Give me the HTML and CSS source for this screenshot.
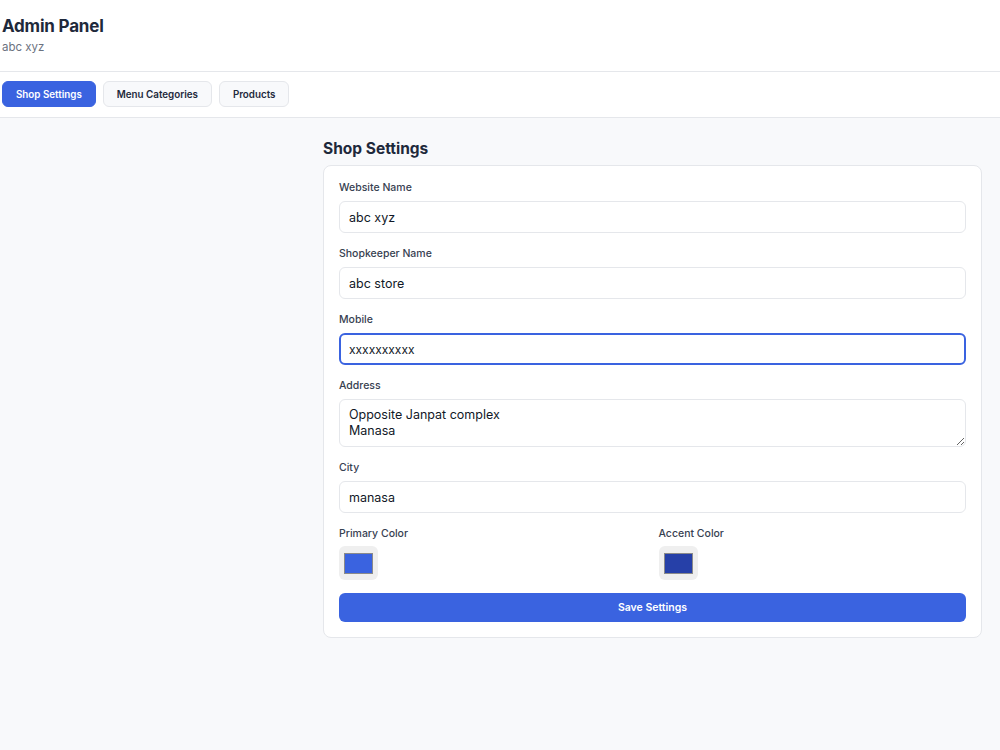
FILE: index.html
```html
<!DOCTYPE html>
<html>
<head>
<meta charset="utf-8">
<link rel="stylesheet" href="styles.css">
</head>
<body>
<header class="top">
  <h1 class="title">Admin Panel</h1>
  <div class="subtitle">abc xyz</div>
</header>
<nav class="tabs">
  <button class="tab active">Shop Settings</button>
  <button class="tab">Menu Categories</button>
  <button class="tab">Products</button>
</nav>
<main class="main">
  <section class="panel">
    <h2 class="heading">Shop Settings</h2>
    <form class="card">
      <div class="field">
        <label class="label">Website Name</label>
        <input class="input" type="text" value="abc xyz">
      </div>
      <div class="field">
        <label class="label">Shopkeeper Name</label>
        <input class="input" type="text" value="abc store">
      </div>
      <div class="field">
        <label class="label">Mobile</label>
        <input class="input focused" type="text" value="xxxxxxxxxx">
      </div>
      <div class="field">
        <label class="label">Address</label>
        <textarea class="input textarea">Opposite Janpat complex
Manasa</textarea>
      </div>
      <div class="field">
        <label class="label">City</label>
        <input class="input" type="text" value="manasa">
      </div>
      <div class="colors">
        <div class="field swatch-field">
          <label class="label">Primary Color</label>
          <div class="swatch-box"><span class="swatch primary"></span></div>
        </div>
        <div class="field swatch-field">
          <label class="label">Accent Color</label>
          <div class="swatch-box"><span class="swatch accent"></span></div>
        </div>
      </div>
      <button type="button" class="save">Save Settings</button>
    </form>
  </section>
</main>
</body>
</html>
```
FILE: styles.css
```css
* { box-sizing: border-box; }
html, body { height: 100%; }
body {
  margin: 0;
  font-family: Inter, "Noto Sans", sans-serif;
  color: #1e293b;
  background: #f8f9fb;
  display: flex;
  flex-direction: column;
}
.top {
  background: #fff;
  padding: 14px 2px 16px;
  border-bottom: 1px solid #e5e7eb;
}
.title {
  margin: 0;
  font-size: 17px;
  line-height: 24px;
  font-weight: 700;
  color: #1e293b;
  letter-spacing: -0.2px;
}
.subtitle {
  font-size: 11.5px;
  line-height: 16px;
  color: #6b7280;
  padding-top: 1px;
}
.tabs {
  background: #fff;
  display: flex;
  gap: 7px;
  padding: 9px 2px 10px;
  border-bottom: 1px solid #e5e7eb;
}
.tab {
  height: 26px;
  padding: 0 13px;
  font-family: inherit;
  font-size: 9.8px;
  font-weight: 600;
  color: #1e293b;
  background: #f8f9fb;
  border: 1px solid #e5e7eb;
  border-radius: 6px;
}
.tab.active {
  background: #3a63e0;
  border-color: #3a63e0;
  color: #fff;
}
.main {
  flex: 1;
  padding: 21px 18px 40px 323px;
}
.heading {
  margin: 0 0 6px;
  font-size: 15.5px;
  line-height: 20px;
  font-weight: 700;
  color: #1e293b;
}
.card {
  background: #fff;
  border: 1px solid #e5e7eb;
  border-radius: 8px;
  padding: 14px 15px 15px;
  display: flex;
  flex-direction: column;
  gap: 13px;
}
.field {
  display: flex;
  flex-direction: column;
  gap: 5px;
}
.swatch-field { gap: 4px; }
.label {
  font-size: 10.5px;
  line-height: 16px;
  font-weight: 500;
  color: #374151;
}
.input {
  height: 32px;
  padding: 0 9px;
  font-family: inherit;
  font-size: 12.5px;
  color: #111827;
  border: 1px solid #e5e7eb;
  border-radius: 6px;
  background: #fff;
  outline: none;
}
.input.focused {
  border: 2px solid #3a63e0;
  padding: 0 8px;
  font-size: 12px;
}
.textarea {
  height: 48px;
  padding: 7px 9px;
  line-height: 16px;
  resize: vertical;
}
.colors {
  display: grid;
  grid-template-columns: 1fr 1fr;
  gap: 12px;
}
.swatch-box {
  width: 39px;
  height: 34px;
  background: #efefef;
  border-radius: 6px;
  display: flex;
  align-items: center;
  justify-content: center;
}
.swatch {
  width: 29px;
  height: 21px;
  border: 1px solid #8a8a8a;
}
.swatch.primary { background: #3a63e0; }
.swatch.accent { background: #2640a8; }
.save {
  height: 29px;
  font-family: inherit;
  font-size: 10.5px;
  font-weight: 600;
  color: #fff;
  background: #3a63e0;
  border: none;
  border-radius: 6px;
}
```
